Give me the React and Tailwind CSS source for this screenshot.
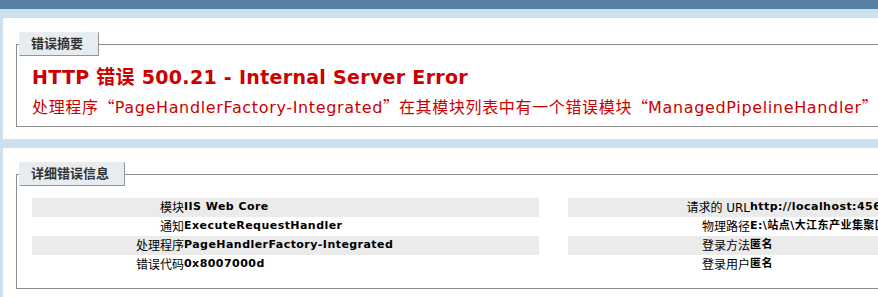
const leftRows = [
  { label: '模块', value: 'IIS Web Core' },
  { label: '通知', value: 'ExecuteRequestHandler' },
  { label: '处理程序', value: 'PageHandlerFactory-Integrated' },
  { label: '错误代码', value: '0x8007000d' },
];

const rightRows = [
  { label: '请求的 URL', value: 'http://localhost:4567/index.aspx' },
  { label: '物理路径', value: 'E:\\站点\\大江东产业集聚区\\index.aspx' },
  { label: '登录方法', value: '匿名' },
  { label: '登录用户', value: '匿名' },
];

const Legend = ({ children }) => (
  <legend className="-ml-[13px] h-[24px] pl-[11px] pr-[15px] leading-[22px] text-[13px] font-bold text-[#333] bg-[#e7ecf0] border-t border-l border-[#ededed] border-r border-b border-r-[#969696] border-b-[#969696]">
    {children}
  </legend>
);

// full-width quotes, like the original CJK font renders them
const Q = ({ children }) => (
  <span className="font-['Noto_Sans_CJK_SC',sans-serif] tracking-normal">{children}</span>
);

const DetailTable = ({ rows, width, labelWidth }) => (
  <div className="flex flex-col shrink-0" style={{ width }}>
    {rows.map((row, i) => (
      <div
        key={row.label}
        className={`flex h-[19px] items-center whitespace-nowrap ${i % 2 === 0 ? 'bg-[#ebebeb]' : ''}`}
      >
        <span className="shrink-0 text-right text-[12px] text-black" style={{ width: labelWidth }}>
          {row.label}
        </span>
        <span className="text-[11px] font-bold tracking-[0.45px] text-black">{row.value}</span>
      </div>
    ))}
  </div>
);

const App = () => {
  return (
    <div className="w-[878px] h-[297px] overflow-hidden bg-[#cbe1ef] font-['DejaVu_Sans','Noto_Sans_CJK_SC',sans-serif]">
      <div className="h-[9px] bg-[#5a7fa5]" />
      <div className="pl-[3px] pt-[9px] w-[1200px]">
        {/* summary */}
        <div className="bg-white pt-[14px] pb-[12px] pl-[13px]">
          <fieldset className="border border-[#8c8c8c] pl-[15px] pb-[9px]">
            <Legend>错误摘要</Legend>
            <div className="mt-[10px] h-[22px] leading-[22px] text-[19px] font-bold tracking-[0.3px] text-[#cc0000] whitespace-nowrap">
              HTTP 错误 500.21 - Internal Server Error
            </div>
            <div className="mt-[7px] h-[22px] leading-[22px] text-[16px] tracking-[0.65px] text-[#cc0000] whitespace-nowrap">
              处理程序<Q>“</Q>PageHandlerFactory-Integrated<Q>”</Q>在其模块列表中有一个错误模块<Q>“</Q>ManagedPipelineHandler<Q>”</Q>
            </div>
          </fieldset>
        </div>

        {/* details */}
        <div className="mt-[9px] bg-white pt-[14px] pb-[11px] pl-[13px]">
          <fieldset className="border border-[#8c8c8c] pl-[15px] pb-[14px]">
            <Legend>详细错误信息</Legend>
            <div className="mt-[12px] flex gap-[29px]">
              <DetailTable rows={leftRows} width={507} labelWidth={152} />
              <DetailTable rows={rightRows} width={560} labelWidth={182} />
            </div>
          </fieldset>
        </div>
      </div>
    </div>
  );
};

export default App;
